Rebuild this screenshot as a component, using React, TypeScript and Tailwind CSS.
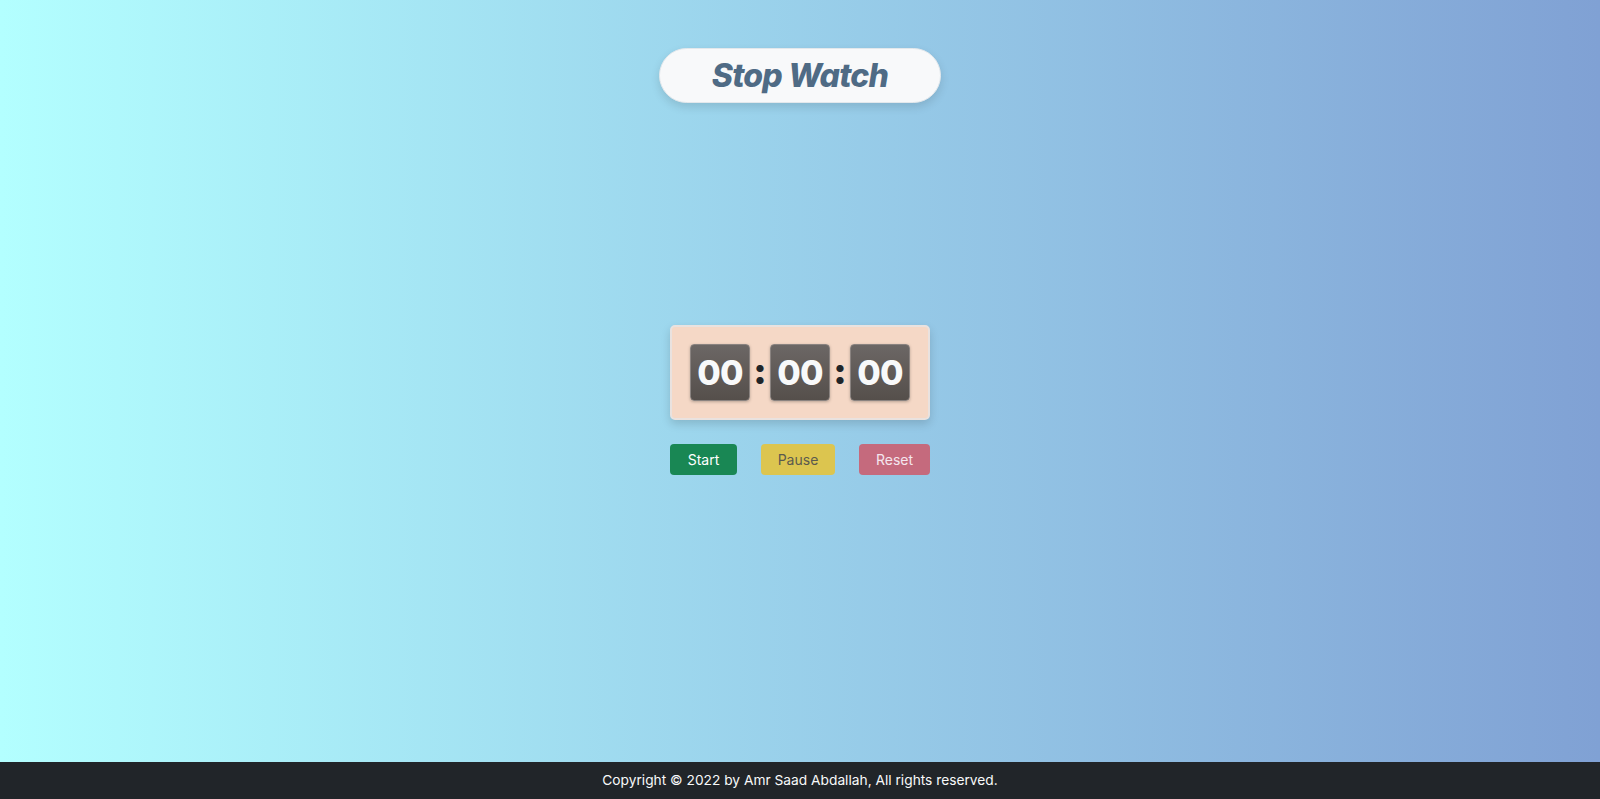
import React, { useState } from 'react';

function Digit({ value }: { value: string }) {
  return (
    <div className="w-[60px] h-[57px] rounded-[4px] border border-[#8a8380] bg-gradient-to-b from-[#6c6765] to-[#554f4b] shadow-[0_1px_3px_rgba(0,0,0,0.25)] flex items-center justify-center">
      <span className="text-[34px] font-extrabold text-[#f8f9fa] leading-none tracking-tight">{value}</span>
    </div>
  );
}

function Colon() {
  return <span className="w-[20px] text-center text-[36px] font-black text-[#212529] leading-none pb-[4px]">:</span>;
}

export default function App() {
  const [running, setRunning] = useState(false);

  return (
    <div
      className="min-h-screen flex flex-col bg-gradient-to-r from-[#b3ffff] to-[#80a1d4]"
      style={{ fontFamily: 'Inter, "Open Sans", sans-serif' }}
    >
      <main className="flex-1 flex flex-col items-center">
        {/* Title */}
        <div className="mt-[48px] w-[282px] h-[55px] rounded-full bg-[#f8f9fa] border border-[#e3e8ec] shadow-[0_4px_10px_rgba(0,0,0,0.12)] flex items-center justify-center">
          <h1 className="text-[32px] font-extrabold italic text-[#4f6b85] tracking-tight">Stop Watch</h1>
        </div>

        {/* Timer */}
        <div className="mt-[222px] w-[260px] h-[95px] rounded-[5px] bg-[#f5d8c6] border-2 border-[#e9e2df] shadow-[0_4px_10px_rgba(0,0,0,0.15)] flex items-center justify-center">
          <Digit value="00" />
          <Colon />
          <Digit value="00" />
          <Colon />
          <Digit value="00" />
        </div>

        {/* Controls */}
        <div className="mt-[24px] flex gap-[24px]">
          <button
            onClick={() => setRunning(true)}
            className="w-[67px] h-[31px] rounded-[4px] bg-[#198754] text-[14px] text-white"
          >
            Start
          </button>
          <button
            disabled={!running}
            onClick={() => setRunning(false)}
            className="w-[74px] h-[31px] rounded-[4px] bg-[#dcc54f] text-[14px] text-[#5b5a4e]"
          >
            Pause
          </button>
          <button
            disabled={!running}
            className="w-[71px] h-[31px] rounded-[4px] bg-[#c56a7d] text-[14px] text-[#f4e6ee]"
          >
            Reset
          </button>
        </div>
      </main>

      <footer className="h-[37px] bg-[#212529] flex items-center justify-center">
        <p className="text-[13.75px] text-[#f8f9fa]">Copyright © 2022 by Amr Saad Abdallah, All rights reserved.</p>
      </footer>
    </div>
  );
}
